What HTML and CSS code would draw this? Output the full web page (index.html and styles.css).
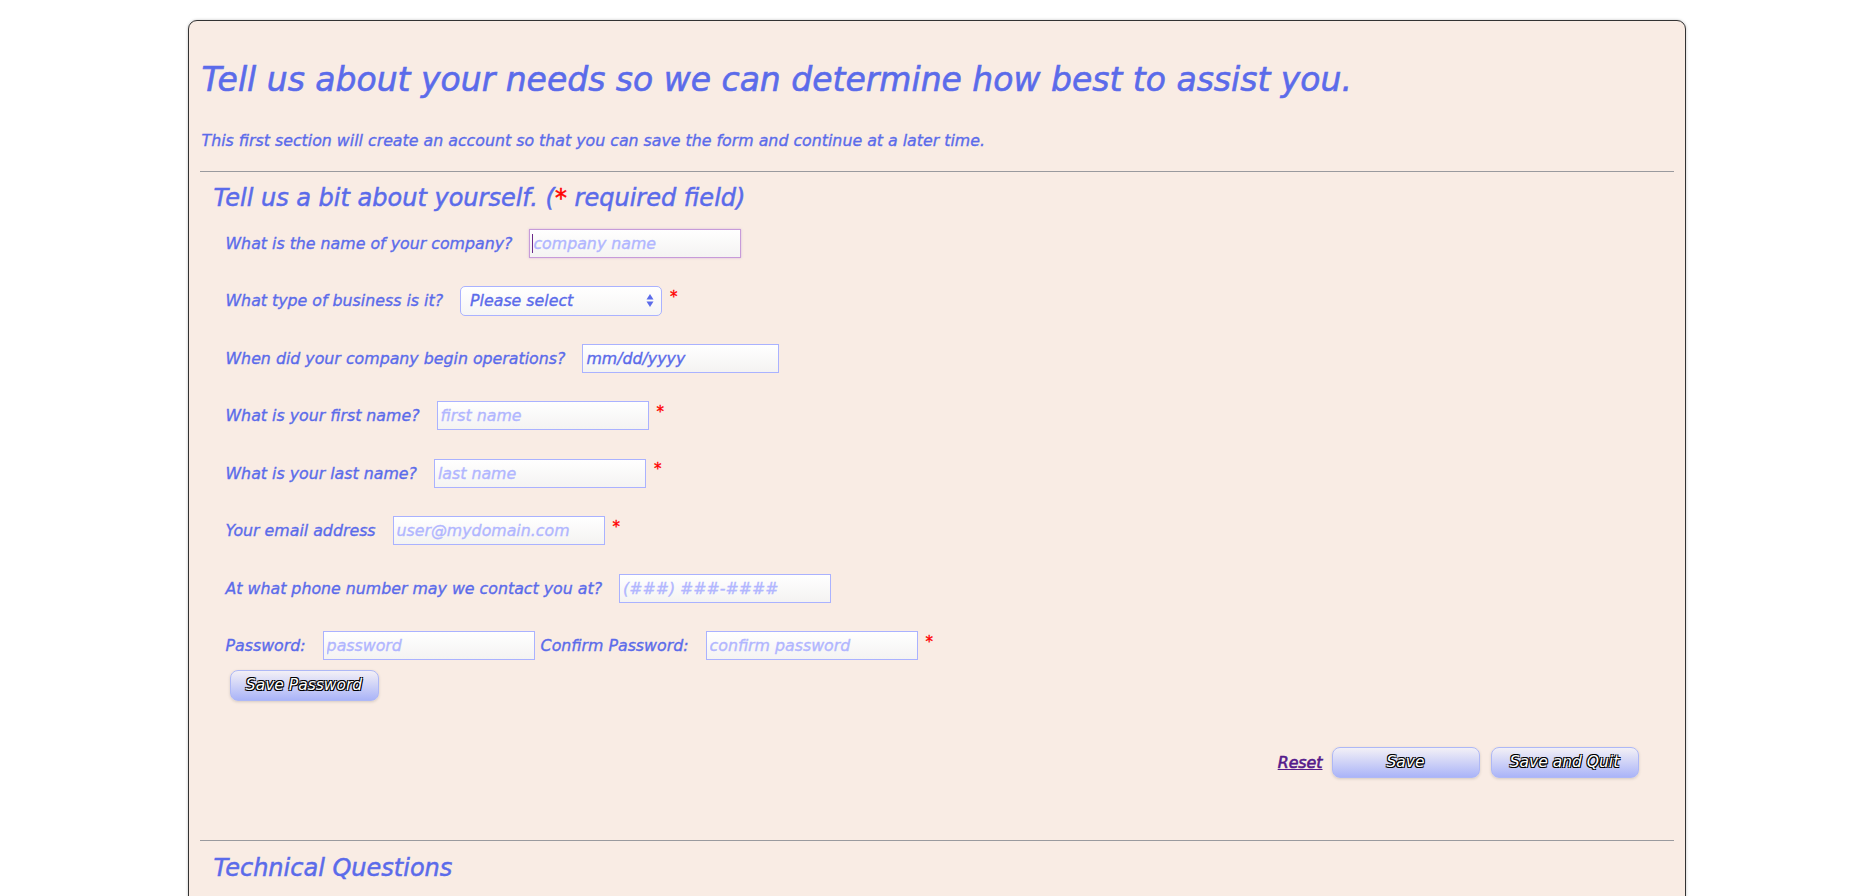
FILE: index.html
```html
<!DOCTYPE html>
<html lang="en">
<head>
<meta charset="utf-8">
<title>Tell us about your needs</title>
<link rel="stylesheet" href="styles.css">
</head>
<body>
<div class="card">
  <h1 class="title">Tell us about your needs so we can determine how best to assist you.</h1>
  <p class="intro">This first section will create an account so that you can save the form and continue at a later time.</p>
  <hr class="rule">
  <section class="section">
    <h2 class="section-title">Tell us a bit about yourself. (<span class="req">*</span> required field)</h2>
    <form class="form">
      <div class="row">
        <label class="label">What is the name of your company?</label>
        <span class="focus-wrap">
          <input class="field focused" type="text" placeholder="company name">
          <span class="caret"></span>
        </span>
      </div>
      <div class="row">
        <label class="label">What type of business is it?</label>
        <span class="select-wrap">
          <select class="select"><option>Please select</option></select>
          <svg class="select-arrows" width="8" height="15" viewBox="0 0 8 15"><path d="M4 1 L7.5 6.5 H0.5 Z" fill="#5b6bea"/><path d="M4 14 L7.5 8.5 H0.5 Z" fill="#5b6bea"/></svg>
        </span>
        <span class="req star">*</span>
      </div>
      <div class="row">
        <label class="label">When did your company begin operations?</label>
        <input class="field date" type="text" placeholder="mm/dd/yyyy">
      </div>
      <div class="row">
        <label class="label">What is your first name?</label>
        <input class="field" type="text" placeholder="first name">
        <span class="req star">*</span>
      </div>
      <div class="row">
        <label class="label">What is your last name?</label>
        <input class="field" type="text" placeholder="last name">
        <span class="req star">*</span>
      </div>
      <div class="row">
        <label class="label">Your email address</label>
        <input class="field" type="text" placeholder="user@mydomain.com">
        <span class="req star">*</span>
      </div>
      <div class="row">
        <label class="label">At what phone number may we contact you at?</label>
        <input class="field" type="text" placeholder="(###) ###-####">
      </div>
      <div class="row row-pw">
        <label class="label">Password:</label>
        <input class="field" type="password" placeholder="password">
        <label class="label label-inline">Confirm Password:</label>
        <input class="field" type="password" placeholder="confirm password">
        <span class="req star">*</span>
      </div>
      <div class="pw-actions">
        <button type="button" class="btn btn-pw">Save Password</button>
      </div>
      <div class="actions">
        <a class="reset" href="#">Reset</a>
        <button type="button" class="btn btn-wide">Save</button>
        <button type="button" class="btn btn-wide">Save and Quit</button>
      </div>
    </form>
  </section>
  <hr class="rule rule-2">
  <section class="section">
    <h2 class="section-title section-title-2">Technical Questions</h2>
  </section>
</div>
</body>
</html>
```
FILE: styles.css
```css
html, body {
  margin: 0;
  padding: 0;
  background: #ffffff;
}
body {
  font-family: "DejaVu Sans", Verdana, sans-serif;
  font-style: italic;
  font-weight: normal;
  color: #5b6bea;
  -webkit-text-stroke: 0.35px currentColor;
}
.card {
  width: 1498px;
  box-sizing: border-box;
  margin: 20px auto 0;
  padding: 0 11px 40px 11px;
  background: #f9ece4;
  border: 1px solid #333333;
  border-radius: 9px;
  box-shadow: 0 0 3px rgba(0,0,0,0.25);
  height: 900px;
}
.title {
  margin: 37px 0 0 2px;
  font-size: 33px;
  font-weight: normal;
  line-height: 44px;
  -webkit-text-stroke: 0.6px currentColor;
}
.intro {
  margin: 30px 0 0 2px;
  font-size: 15.8px;
  line-height: 18px;
}
.rule {
  margin: 21px 0 0 0;
  border: 0;
  border-top: 1px solid #9a9a9e;
  height: 0;
}
.section {
  padding: 0 0 0 14px;
}
.section-title {
  margin: 11px 0 0 0;
  font-size: 24px;
  font-weight: normal;
  line-height: 30px;
  -webkit-text-stroke: 0.5px currentColor;
}
.section-title-2 {
  margin-top: 12px;
}
.req {
  color: #ff0000;
}
.form {
  padding: 0 0 0 12px;
}
.row {
  display: flex;
  align-items: center;
  height: 30px;
  margin-top: 27.5px;
}
.form .row:first-child {
  margin-top: 15px;
}
.label {
  font-size: 15.8px;
  margin-right: 17px;
  white-space: nowrap;
}
.label-inline {
  margin-left: 6px;
}
.field {
  box-sizing: border-box;
  width: 212px;
  height: 29px;
  padding: 2px 3px;
  border: 1px solid #aab2ff;
  border-radius: 0;
  background: linear-gradient(#ffffff, #f4f3f2);
  font-family: "DejaVu Sans", Verdana, sans-serif;
  font-style: italic;
  font-size: 15.8px;
  color: #5b6bea;
  -webkit-text-stroke: 0.35px currentColor;
  outline: none;
}
.field::placeholder {
  color: #b1b6ff;
}
.field.date {
  width: 197px;
}
.field.date::placeholder {
  color: #5b6bea;
}
.focus-wrap {
  position: relative;
  display: inline-block;
}
.field.focused {
  border-color: #c79bd9;
  box-shadow: 0 0 2px rgba(180,130,210,0.5);
}
.caret {
  position: absolute;
  left: 3px;
  top: 5px;
  width: 1px;
  height: 19px;
  background: #6a2a8a;
}
.select-wrap {
  position: relative;
  display: inline-block;
}
.select {
  -webkit-appearance: none;
  appearance: none;
  box-sizing: border-box;
  width: 202px;
  height: 30px;
  padding: 0 24px 0 9px;
  border: 1px solid #aab2ff;
  border-radius: 5px;
  background: linear-gradient(#ffffff, #f6f5f4);
  font-family: "DejaVu Sans", Verdana, sans-serif;
  font-style: italic;
  font-size: 15.8px;
  color: #5b6bea;
  -webkit-text-stroke: 0.35px currentColor;
}
.select-arrows {
  position: absolute;
  right: 8px;
  top: 7px;
  pointer-events: none;
}
.star {
  margin-left: 8px;
  font-size: 15px;
  align-self: flex-start;
  margin-top: 2px;
}
.pw-actions {
  margin-top: 9px;
  padding-left: 4px;
}
.btn {
  box-sizing: border-box;
  height: 31px;
  border: 1px solid #aeb8f6;
  border-radius: 8px;
  background: linear-gradient(#f3f0f6, #aab4f8);
  box-shadow: 0 1px 3px rgba(0,0,0,0.15);
  font-family: "DejaVu Sans", Verdana, sans-serif;
  font-style: italic;
  font-size: 15.5px;
  color: #ffffff;
  -webkit-text-stroke: 0;
  text-shadow: -1px -1px 0 #000, 1px -1px 0 #000, -1px 1px 0 #000, 1px 1px 0 #000;
  padding: 0 10px;
}
.btn-pw {
  width: 149px;
}
.btn-wide {
  width: 148px;
}
.actions {
  display: flex;
  justify-content: flex-end;
  align-items: center;
  gap: 11px;
  margin-top: 46px;
  padding-right: 35px;
}
.reset {
  color: #551a8b;
  font-weight: normal;
  font-size: 15.8px;
  -webkit-text-stroke: 0.6px currentColor;
  text-decoration: underline;
  margin-right: -2px;
}
.rule-2 {
  margin-top: 62px;
}
```
